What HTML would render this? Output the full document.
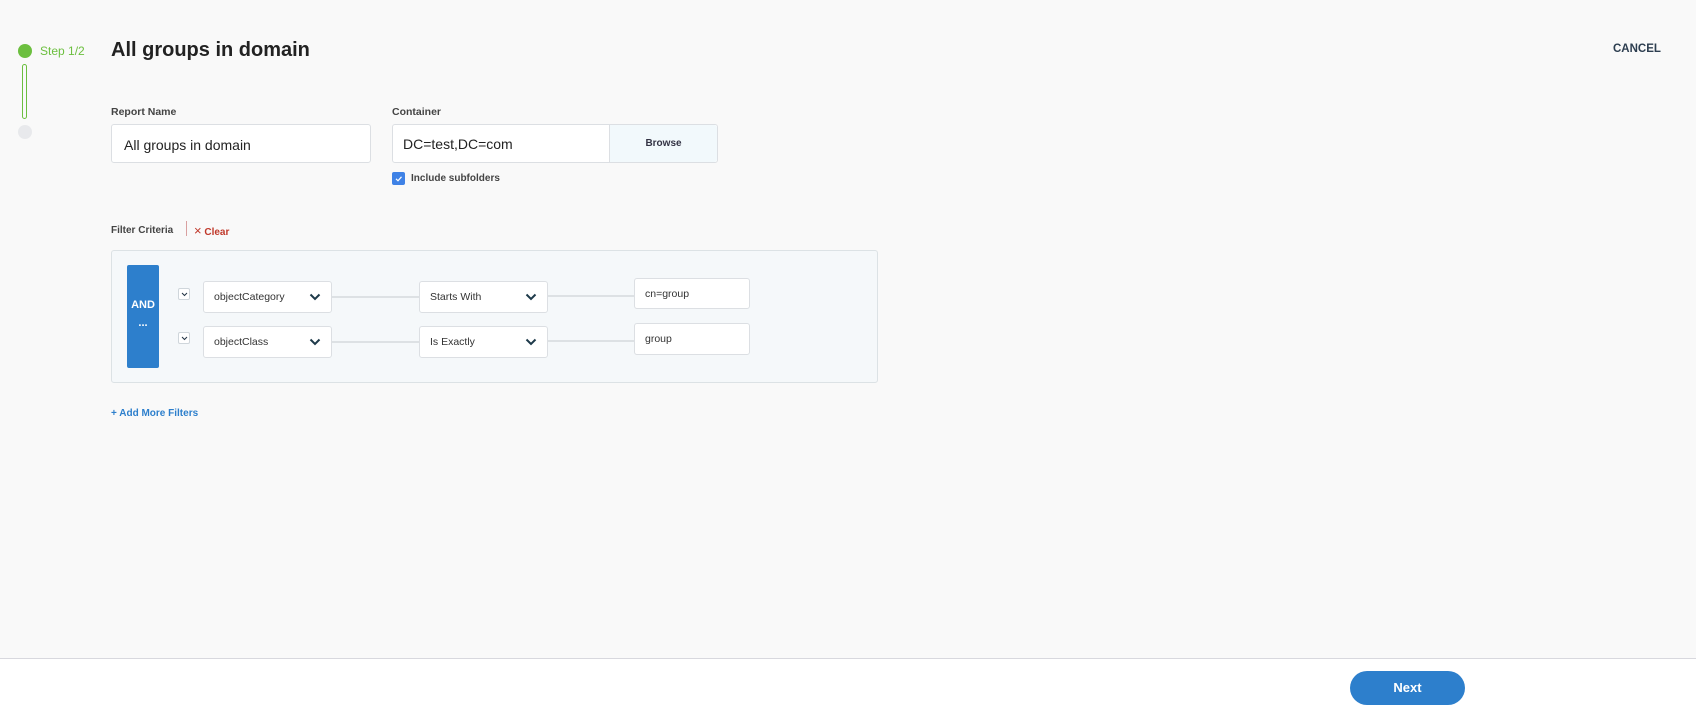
<!DOCTYPE html>
<html><head><style>
*{box-sizing:border-box;margin:0;padding:0}
body{width:1696px;height:715px;background:#f9f9f9;font-family:"Liberation Sans",sans-serif;position:relative;overflow:hidden}
.a{position:absolute}
.lbl{font-size:11px;font-weight:bold;color:#444}
.inp{background:#fff;border:1px solid #dcdfe3;border-radius:3px}
.dd{background:#fff;border:1px solid #dcdfe3;border-radius:3px;font-size:10.5px;color:#333;padding-left:10px;display:flex;align-items:center}
.dd svg{position:absolute;right:10px;top:50%;margin-top:-4px}
.tg{background:#fff;border:1px solid #cfd6db;border-radius:2px;width:12px;height:12px}
.tg svg{display:block;margin:3px auto}
.ln{height:2px;background:#dde1e4}
</style></head><body>
<div class="a" style="left:18px;top:44px;width:14px;height:14px;border-radius:50%;background:#6cbf3f"></div>
<div class="a" style="left:22px;top:64px;width:5px;height:55px;border:1.5px solid #6cbf3f;border-radius:3px"></div>
<div class="a" style="left:18px;top:125px;width:14px;height:14px;border-radius:50%;background:#e8e9ec"></div>
<div class="a" style="left:40px;top:44px;font-size:12px;color:#6cbf3f">Step 1/2</div>
<div class="a" style="left:111px;top:39px;font-size:20px;font-weight:bold;color:#222">All groups in domain</div>
<div class="a" style="left:1613px;top:43px;font-size:11.5px;font-weight:bold;color:#2d3e50">CANCEL</div>

<div class="a lbl" style="left:111px;top:106px;font-size:10.5px">Report Name</div>
<div class="a inp" style="left:111px;top:124px;width:260px;height:39px;font-size:14px;color:#222;padding:12px 0 0 12px">All groups in domain</div>
<div class="a lbl" style="left:392px;top:106px;font-size:10.5px">Container</div>
<div class="a inp" style="left:392px;top:124px;width:326px;height:39px"></div>
<div class="a" style="left:403px;top:136px;font-size:14px;color:#222">DC=test,DC=com</div>
<div class="a" style="left:609px;top:125px;width:108px;height:37px;background:#f2f9fc;border-left:1px solid #dcdfe3;border-radius:0 3px 3px 0;font-size:10px;font-weight:bold;color:#334;text-align:center;line-height:37px">Browse</div>
<div class="a" style="left:392px;top:172px;width:13px;height:13px;background:#3f82e6;border-radius:2px"><svg width="13" height="13"><path d="M4 6.8l2 2 3.5-4" stroke="#fff" stroke-width="1.2" fill="none"/></svg></div>
<div class="a lbl" style="left:411px;top:173px;font-size:10px">Include subfolders</div>

<div class="a lbl" style="left:111px;top:225px;font-size:10px">Filter Criteria</div>
<div class="a" style="left:186px;top:221px;width:1px;height:15px;background:#d9a0a0"></div>
<div class="a" style="left:194px;top:223px;font-size:10px;font-weight:bold;color:#c0392b"><span style="font-weight:normal;font-size:13px">×</span> Clear</div>

<div class="a" style="left:111px;top:250px;width:767px;height:133px;background:#f5f8fa;border:1px solid #dce2e5;border-radius:3px"></div>
<div class="a" style="left:127px;top:265px;width:32px;height:103px;background:#2d7fcc;border-radius:2px;color:#fff;font-weight:bold;font-size:11px;text-align:center"><div style="margin-top:34px">AND</div><div style="margin-top:6px">...</div></div>

<div class="a tg" style="left:178px;top:288px"><svg width="7" height="5"><path d="M1 1l2.5 2.5L6 1" stroke="#234" fill="none"/></svg></div>
<div class="a tg" style="left:178px;top:332px"><svg width="7" height="5"><path d="M1 1l2.5 2.5L6 1" stroke="#234" fill="none"/></svg></div>

<div class="a ln" style="left:332px;top:296px;width:87px"></div>
<div class="a ln" style="left:548px;top:295px;width:86px"></div>
<div class="a ln" style="left:332px;top:341px;width:87px"></div>
<div class="a ln" style="left:548px;top:340px;width:86px"></div>

<div class="a dd" style="left:203px;top:281px;width:129px;height:32px">objectCategory<svg width="12" height="8"><path d="M1.5 1.5l4.5 4.5 4.5-4.5" stroke="#1e3a4a" stroke-width="2" fill="none"/></svg></div>
<div class="a dd" style="left:419px;top:281px;width:129px;height:32px">Starts With<svg width="12" height="8"><path d="M1.5 1.5l4.5 4.5 4.5-4.5" stroke="#1e3a4a" stroke-width="2" fill="none"/></svg></div>
<div class="a dd" style="left:634px;top:278px;width:116px;height:31px">cn=group</div>
<div class="a dd" style="left:203px;top:326px;width:129px;height:32px">objectClass<svg width="12" height="8"><path d="M1.5 1.5l4.5 4.5 4.5-4.5" stroke="#1e3a4a" stroke-width="2" fill="none"/></svg></div>
<div class="a dd" style="left:419px;top:326px;width:129px;height:32px">Is Exactly<svg width="12" height="8"><path d="M1.5 1.5l4.5 4.5 4.5-4.5" stroke="#1e3a4a" stroke-width="2" fill="none"/></svg></div>
<div class="a dd" style="left:634px;top:323px;width:116px;height:32px">group</div>

<div class="a" style="left:111px;top:408px;font-size:10px;font-weight:bold;color:#2d7fcc">+ Add More Filters</div>

<div class="a" style="left:0;top:658px;width:1696px;height:57px;background:#fff;border-top:1px solid #d8d8de"></div>
<div class="a" style="left:1350px;top:671px;width:115px;height:34px;background:#2d7fcc;border-radius:17px;color:#fff;font-weight:bold;font-size:13px;text-align:center;line-height:34px">Next</div>
</body></html>
